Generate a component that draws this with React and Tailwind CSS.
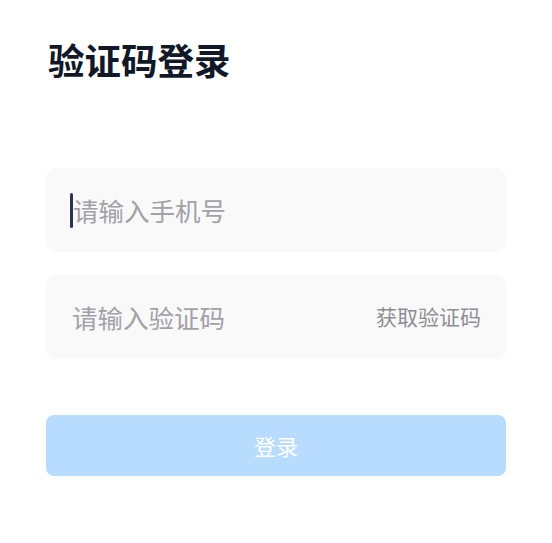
import React from 'react';

export default function App() {
  return (
    <div
      className="min-h-[543px] w-[552px] bg-white px-[46px] pt-[35px]"
      style={{ fontFamily: '"Noto Sans CJK SC", "Noto Sans", sans-serif' }}
    >
      <h1 className="pl-[2px] text-[36.5px] font-bold leading-[50px] text-[#111827]">验证码登录</h1>

      <div className="mt-[83px] flex flex-col gap-[23px]">
        {/* Phone */}
        <div className="flex h-[84px] items-center rounded-[10px] bg-[#f9f9fa] pl-[24px] pr-[25px]">
          <span className="h-[35px] w-[3px] rounded-sm bg-[#2c3550]" />
          <span className="text-[25.5px] text-[#a1a1a6]">请输入手机号</span>
        </div>

        {/* Code */}
        <div className="flex h-[84px] items-center justify-between rounded-[10px] bg-[#f9f9fa] pl-[26px] pr-[25px]">
          <span className="text-[25.5px] text-[#a1a1a6]">请输入验证码</span>
          <span className="text-[21px] text-[#8e8e93]">获取验证码</span>
        </div>
      </div>

      <button className="mt-[56px] flex h-[61px] w-full items-center justify-center rounded-[8px] bg-[#b8dcfe] text-[22px] text-white">
        登录
      </button>
    </div>
  );
}
